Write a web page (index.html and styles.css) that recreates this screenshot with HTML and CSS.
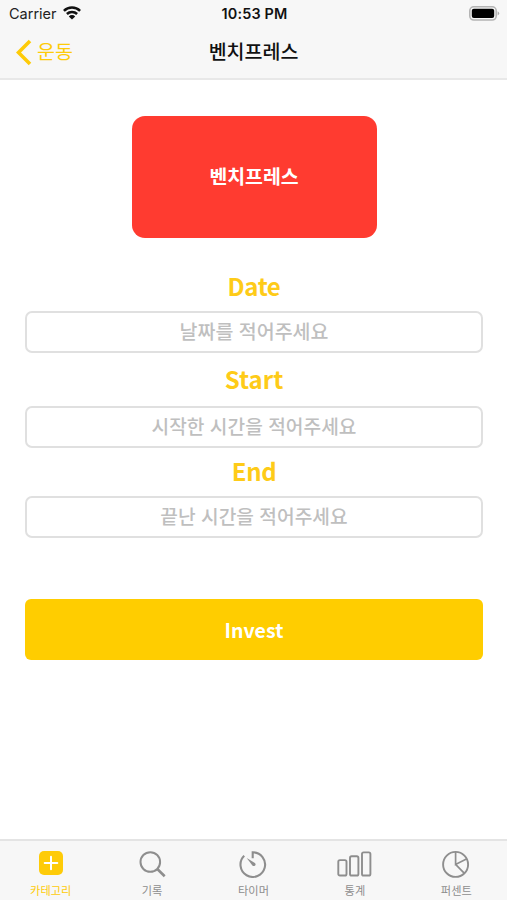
FILE: index.html
```html
<!DOCTYPE html>
<html lang="ko">
<head>
<meta charset="utf-8">
<meta name="viewport" content="width=device-width, initial-scale=1">
<title>벤치프레스</title>
<link rel="stylesheet" href="styles.css">
</head>
<body>
<div class="screen">
  <header class="header">
    <div class="status">
      <div class="carrier"><span>Carrier</span>
        <svg width="18" height="14" viewBox="0 0 18 14"><g fill="none" stroke="#111" stroke-width="2.5"><path d="M.9 4.9a11.5 11.5 0 0 1 16.2 0"/><path d="M3.9 8a7.2 7.2 0 0 1 10.2 0"/></g><path d="M9 13.6 5.8 10.4a4.5 4.5 0 0 1 6.4 0z" fill="#111"/></svg>
      </div>
      <span class="time">10:53 PM</span>
      <svg class="battery" width="31" height="15" viewBox="0 0 31 15"><rect x=".8" y=".8" width="26.4" height="13.2" rx="4" fill="#f7f7f7" stroke="#b4b4b4" stroke-width="1.6"/><rect x="2.8" y="2.8" width="22.4" height="9.2" rx="2" fill="#000"/><path d="M28.6 5.2q3.2 2.2 0 4.4z" fill="#aaa"/></svg>
    </div>
    <nav class="nav">
      <a class="back"><svg width="16" height="27" viewBox="0 0 16 27"><path d="M14 2 2.5 13.5 14 25" fill="none" stroke="#fecb08" stroke-width="3.6"/></svg><span>운동</span></a>
      <h1>벤치프레스</h1>
      <span></span>
    </nav>
  </header>
  <main class="content">
    <section class="card">벤치프레스</section>
    <form class="form">
      <label class="label date" for="date"><span>Date</span></label>
      <input id="date" class="field" placeholder="날짜를 적어주세요">
      <label class="label start" for="start"><span>Start</span></label>
      <input id="start" class="field long" placeholder="시작한 시간을 적어주세요">
      <label class="label end" for="end"><span>End</span></label>
      <input id="end" class="field long" placeholder="끝난 시간을 적어주세요">
      <button class="invest" type="button">Invest</button>
    </form>
  </main>
  <footer class="tabs">
    <a class="tab active"><svg viewBox="0 0 36 28"><rect x="6" y="1" width="24" height="24" rx="5" fill="#fecb08"/><path d="M18 6.7v12.6M11.7 13h12.6" stroke="#fff" stroke-width="2" stroke-linecap="round"/></svg><span>카테고리</span></a>
    <a class="tab"><svg viewBox="0 0 36 28"><circle cx="16.3" cy="12" r="9.8"/><path d="m23.3 19 7.4 7.2" stroke-width="2.6"/></svg><span>기록</span></a>
    <a class="tab"><svg viewBox="0 0 36 28"><path d="M17.7 8.2V2.3A12.3 12.3 0 1 1 9.2 5.8" stroke-width="2.1"/><path d="m11.7 7.9 8.2 5.2c2 2-.7 4.1-2.5 2.4z" fill="#8e8e8e" stroke="none"/></svg><span>타이머</span></a>
    <a class="tab"><svg viewBox="0 0 36 28"><g stroke-width="1.9"><rect x="1.3" y="10.1" width="8.2" height="15.4" rx="1.6"/><rect x="13" y="6.3" width="8.4" height="19.2" rx="1.6"/><rect x="25" y="2.4" width="8.4" height="23.1" rx="1.6"/></g></svg><span>통계</span></a>
    <a class="tab"><svg viewBox="0 0 36 28"><circle cx="17.6" cy="14.4" r="12.5" stroke-width="1.9"/><path d="M17.6 1.9v12.5l11.3-5.6M17.6 14.4l8.8 8.9" stroke-width="1.7"/></svg><span>퍼센트</span></a>
  </footer>
</div>
</body>
</html>
```
FILE: styles.css
```css
* { box-sizing: border-box; }
body { margin: 0; background: #fff; font-family: "Noto Sans CJK KR", sans-serif; }
.screen { width: 507px; height: 900px; display: flex; flex-direction: column; overflow: hidden; }
.header { height: 80px; background: #f7f7f7; border-bottom: 2px solid #e8e8e8; }
.status { height: 27px; display: grid; grid-template-columns: 1fr auto 1fr; align-items: center; padding: 0 7px 0 9px; font: 14.5px/17px Inter, sans-serif; color: #222; }
.carrier { display: flex; align-items: center; gap: 6px; }
.carrier svg { margin-top: -2px; }
.time { font-size: 14.4px; font-weight: 600; letter-spacing: .2px; color: #111; }
.battery { justify-self: end; margin-top: -1px; }
.nav { height: 51px; display: grid; grid-template-columns: 1fr auto 1fr; align-items: center; padding: 0 16px; }
.back { display: flex; align-items: center; gap: 5px; color: #fecb08; font-size: 19.5px; line-height: 28px; }
.back span, h1 { padding-bottom: 3px; }
h1 { margin: 0; font-size: 19.5px; line-height: 28px; font-weight: 500; color: #111; }
.content { flex: 1; padding: 36px 24px 0 25px; }
.card { width: 245px; height: 122px; margin: 0 auto; padding-bottom: 3px; border-radius: 13px; background: #ff3b30; color: #fff; display: flex; align-items: center; justify-content: center; font-size: 19.4px; font-weight: 700; }
.form { display: flex; flex-direction: column; }
.label { display: flex; align-items: center; justify-content: center; color: #fecb18; font-size: 24px; line-height: 30px; font-weight: 700; padding-bottom: 2px; }
.label span { letter-spacing: -.4px; }
.date { height: 73px; padding-top: 24px; }
.start { height: 53px; }
.end { height: 48px; }
.start span { letter-spacing: 0; }
.field { width: 458px; height: 42px; border: 2px solid #e0e0e0; border-radius: 7px; padding: 0 0 3px; background: #fff; text-align: center; font: 500 19.5px/28px "Noto Sans CJK KR", sans-serif; color: #222; }
.field::placeholder { color: #bfbfbf; opacity: 1; }
.long { font-size: 19.2px; }
.invest { width: 458px; height: 61px; margin-top: 61px; padding: 0; border: 0; border-radius: 6px; background: #ffcd00; color: #fff; font: 700 19.5px/28px "Noto Sans CJK KR", sans-serif; }
.tabs { height: 61px; border-top: 2px solid #e4e4e4; background: #f7f7f7; display: grid; grid-template-columns: repeat(5, 1fr); padding-top: 9px; }
.tab { display: flex; flex-direction: column; align-items: center; gap: 4px; color: #8e8e8e; font-size: 11.2px; line-height: 16px; }
.tab svg { width: 36px; height: 28px; flex: none; fill: none; stroke: #8e8e8e; stroke-width: 2; }
.active { color: #fecb08; }
.active rect { stroke: none; }
```
